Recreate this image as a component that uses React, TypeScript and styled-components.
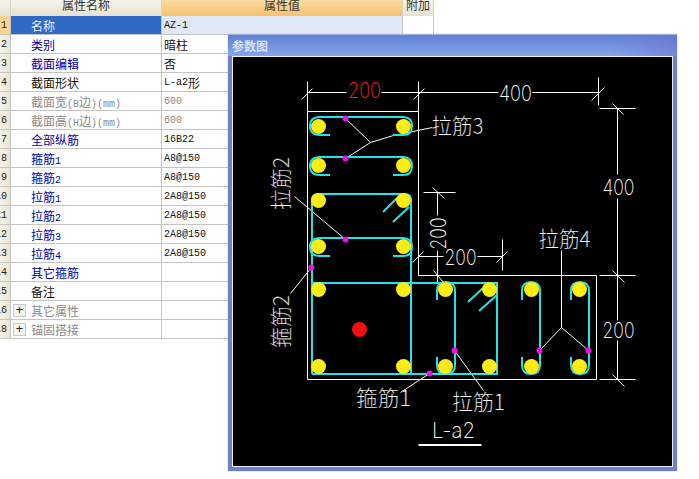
import React from "react";
import styled, { createGlobalStyle } from "styled-components";

const Global = createGlobalStyle`
  html, body { margin: 0; padding: 0; background: #fff; }
  body { width: 699px; height: 479px; overflow: hidden; position: relative; }
`;

const CJK = `"Noto Sans CJK SC", "Liberation Sans", sans-serif`;

const Sheet = styled.div`
  width: 434px;
  display: flex;
  flex-direction: column;
  font-family: ${CJK};
  font-size: 12px;
`;
const HeadRow = styled.div`
  display: grid;
  grid-template-columns: 11px 151px 241px 31px;
  height: 16px;
`;
const HeadCell = styled.div<{ $active?: boolean }>`
  overflow: hidden;
  box-sizing: border-box;
  display: flex;
  justify-content: center;
  align-items: flex-end;
  padding-bottom: 4px;
  line-height: 14px;
  color: #333;
  border-right: 1px solid #d8d4c4;
  background: ${(p) => p.$active
    ? "linear-gradient(#fbdca0, #f5c170)"
    : "linear-gradient(#f6f4ea, #e6e2d2)"};
`;
const Row = styled.div`
  display: grid;
  grid-template-columns: 11px 151px 241px 31px;
  height: 19px;
`;
const IndexCell = styled.div<{ $active?: boolean }>`
  box-sizing: border-box;
  overflow: hidden;
  display: flex;
  justify-content: flex-end;
  align-items: center;
  padding-right: 3px;
  font: 10px "Liberation Mono", monospace;
  color: #222;
  border-right: 1px solid #c4c4c0;
  border-bottom: 1px solid #c4c4c0;
  background: ${(p) => p.$active ? "#fbd58e" : "linear-gradient(90deg, #f4f2e8, #e8e5d6)"};
`;
const NameCell = styled.div<{ $tone: string; $selected?: boolean; $tree?: boolean }>`
  box-sizing: border-box;
  display: flex;
  align-items: center;
  gap: 5px;
  white-space: nowrap;
  overflow: hidden;
  padding-left: ${(p) => p.$tree ? "2px" : "20px"};
  color: ${(p) => p.$selected ? "#e8eefa" : p.$tone};
  background: ${(p) => p.$selected ? "#316ac5" : "#fff"};
  border-right: 1px solid #c4c4c4;
  border-bottom: 1px solid #c4c4c4;
`;
const Latin = styled.span`
  font: 10px "Liberation Mono", monospace;
`;
const ValueCell = styled.div<{ $tone: string; $selected?: boolean }>`
  box-sizing: border-box;
  display: flex;
  align-items: center;
  padding-left: 2px;
  white-space: nowrap;
  font: 10px "Liberation Mono", ${CJK};
  color: ${(p) => p.$tone};
  background: ${(p) => p.$selected ? "#e0e8f5" : "#fff"};
  border-right: 1px solid #c4c4c4;
  border-bottom: 1px solid #c4c4c4;
`;
const Han = styled.span`
  font: 12px ${CJK};
`;
const ExtraCell = styled.div`
  box-sizing: border-box;
  background: #fff;
  border-right: 1px solid #c4c4c4;
  border-bottom: 1px solid #c4c4c4;
`;
const Expander = styled.span`
  width: 11px;
  height: 11px;
  flex: none;
  border: 1px solid #c8c8c8;
  background: #f4f4f0;
  display: flex;
  align-items: center;
  justify-content: center;
  font: 13px/11px "Liberation Mono", monospace;
  color: #222;
`;

const Win = styled.section`
  position: absolute;
  left: 228px;
  top: 34px;
  width: 449px;
  height: 437px;
  box-sizing: border-box;
  display: flex;
  flex-direction: column;
  padding: 0 4px 4px;
  background: #6c80cf;
  border-top: 1px solid #9fb0dc;
  box-shadow: 0 0 1px #9aa6dc;
`;
const WinTitle = styled.header`
  height: 21px;
  flex: none;
  margin: 0 -4px;
  padding-left: 4px;
  display: flex;
  align-items: center;
  background:
    linear-gradient(90deg, transparent 85%, rgba(108, 112, 205, 0.55)),
    linear-gradient(#5f80d6, #86a6e8);
  font: bold 12px ${CJK};
  color: #d6e0f4;
`;
const Canvas = styled.div`
  flex: 1;
  min-height: 0;
  background: #000;
  border: 1px solid #eef0fa;
`;
const Drawing = styled.svg`
  display: block;
  width: 100%;
  height: 100%;
`;
const Rule = styled.path<{ $w?: number }>`
  fill: none;
  stroke: #fff;
  stroke-width: ${(p) => p.$w ?? 1};
`;
const Steel = styled.path`
  fill: none;
  stroke: #22e4e8;
  stroke-width: 2;
`;
const Dot = styled.circle<{ $c: string }>`
  fill: ${(p) => p.$c};
`;
const Num = styled.text<{ $c?: string }>`
  font: 200 22px "Inter", "Liberation Sans", sans-serif;
  fill: ${(p) => p.$c ?? "#fff"};
  text-anchor: middle;
  dominant-baseline: central;
`;
const Tag = styled.text`
  font: 300 22px "Noto Sans CJK SC", sans-serif;
  fill: #fff;
  text-anchor: middle;
  dominant-baseline: central;
  stroke: #000;
  stroke-width: 0.2px;
`;

type R = { n: string; name: React.ReactNode; tone: string; val?: React.ReactNode; vt?: string; tree?: boolean };
const B = "#0000a8", K = "#111", G = "#8a8a8a";
const rows: R[] = [
  { n: "1", name: "名称", tone: B, val: "AZ-1", vt: K },
  { n: "2", name: "类别", tone: B, val: <Han>暗柱</Han>, vt: K },
  { n: "3", name: "截面编辑", tone: B, val: <Han>否</Han>, vt: K },
  { n: "4", name: "截面形状", tone: K, val: <>L-a2<Han>形</Han></>, vt: K },
  { n: "5", name: <>截面宽<Latin>(B</Latin>边<Latin>)(mm)</Latin></>, tone: G, val: "600", vt: G },
  { n: "6", name: <>截面高<Latin>(H</Latin>边<Latin>)(mm)</Latin></>, tone: G, val: "600", vt: G },
  { n: "7", name: "全部纵筋", tone: B, val: "16B22", vt: K },
  { n: "8", name: <>箍筋<Latin>1</Latin></>, tone: B, val: "A8@150", vt: K },
  { n: "9", name: <>箍筋<Latin>2</Latin></>, tone: B, val: "A8@150", vt: K },
  { n: "10", name: <>拉筋<Latin>1</Latin></>, tone: B, val: "2A8@150", vt: K },
  { n: "11", name: <>拉筋<Latin>2</Latin></>, tone: B, val: "2A8@150", vt: K },
  { n: "12", name: <>拉筋<Latin>3</Latin></>, tone: B, val: "2A8@150", vt: K },
  { n: "13", name: <>拉筋<Latin>4</Latin></>, tone: B, val: "2A8@150", vt: K },
  { n: "14", name: "其它箍筋", tone: B },
  { n: "15", name: "备注", tone: K },
  { n: "16", name: "其它属性", tone: G, tree: true },
  { n: "18", name: "锚固搭接", tone: G, tree: true },
];

const bars: [number, number][] = [
  [318, 126], [403, 126], [318, 165], [403, 165], [318, 200], [403, 200], [318, 246], [403, 246],
  [318, 289], [403, 289], [318, 366], [403, 366], [445, 289], [489, 289], [445, 366], [489, 366],
  [531, 289], [579, 289], [531, 366], [579, 366],
];
const links: [number, number][] = [[345, 118], [345, 158], [345, 239], [311, 267], [429, 373], [454, 350], [539, 350], [588, 350]];

const hTie = (t: number) => {
  const b = t + 18, m = t + 9;
  return `M330 ${b}H320Q310 ${b} 310 ${m}Q310 ${t} 320 ${t}H403Q412 ${t} 412 ${m}Q412 ${b} 403 ${b}H393`;
};
const vTie = (l: number) => {
  const r = l + 18, c = l + 9;
  return `M${l} 300V291Q${l} 282 ${c} 282Q${r} 282 ${r} 291V365Q${r} 374 ${c} 374Q${l} 374 ${l} 365V357`;
};

const rules = [
  "M307 81V111M301 99L312 88M418 81V111M413 99L424 88M307 92H346M381 92H498M532 92H598M598 77V105M591 100L604 87",
  "M599 108H635M612 103L623 114M617 108V174M617 198V320M599 275H635M612 270L624 282M617 340V379M599 379H635M612 374L624 386",
  "M423 192H455M432 187L444 198M437 192V215M437 250V282M433 270L443 282M418 256H443M477 256H502M502 239V270M412 262L423 251M496 262L507 251",
  "M345 118L370 142M345 158L370 142L393 135L432 127M345 239L294 196M311 267L290 293M429 373L400 392M454 350L483 390",
  "M561 250V327L539 350M561 327L588 350",
];

export default function App() {
  return (
    <>
      <Global />
      <Sheet>
        <HeadRow>
          <HeadCell />
          <HeadCell>属性名称</HeadCell>
          <HeadCell $active>属性值</HeadCell>
          <HeadCell>附加</HeadCell>
        </HeadRow>
        {rows.map((r, i) => (
          <Row key={r.n}>
            <IndexCell $active={i === 0}>{r.n}</IndexCell>
            <NameCell $tone={r.tone} $selected={i === 0} $tree={r.tree}>
              {r.tree && <Expander>+</Expander>}
              <span>{r.name}</span>
            </NameCell>
            <ValueCell $tone={r.vt ?? K} $selected={i === 0}>{r.val}</ValueCell>
            <ExtraCell />
          </Row>
        ))}
      </Sheet>
      <Win>
        <WinTitle>参数图</WinTitle>
        <Canvas>
          <Drawing viewBox="232.5 56.5 439 409" preserveAspectRatio="none">
            <Rule d="M307 111H418V275H596V379H307Z" />
            {rules.map((d) => <Rule key={d} d={d} />)}
            <Rule $w={2} d="M418 444.5H481" />
            <g transform="translate(-0.5 -0.5)">
              <Steel d={hTie(117)} />
              <Steel d={hTie(157)} />
              <Steel d={hTie(238)} />
              <Steel d="M312 374V200Q312 194 318 194H405Q411 194 411 200V374" />
              <Steel d="M312 374H497V283H312" />
              <Steel d={vTie(437)} />
              <Steel d={vTie(522)} />
              <Steel d={vTie(571)} />
              <Steel d="M383 212L397 198M393 222L409 207M468 302L483 288M479 311L497 295" />
            </g>
            {bars.map(([x, y]) => <Dot key={`${x}-${y}`} $c="#ffec12" cx={x} cy={y} r={7.5} />)}
            <Dot $c="#f01010" cx={359} cy={329} r={7.5} />
            {links.map(([x, y]) => <Dot key={`${x}-${y}`} $c="#ee10e8" cx={x} cy={y} r={3} />)}
            <Num $c="#ff2020" x={364} y={89} textLength={33} lengthAdjust="spacingAndGlyphs">200</Num>
            <Num x={515} y={92} textLength={33} lengthAdjust="spacingAndGlyphs">400</Num>
            <Num x={618} y={186} textLength={32} lengthAdjust="spacingAndGlyphs">400</Num>
            <Num x={618} y={329} textLength={32} lengthAdjust="spacingAndGlyphs">200</Num>
            <Num x={460} y={256} textLength={32} lengthAdjust="spacingAndGlyphs">200</Num>
            <Num x={437} y={233} textLength={32} lengthAdjust="spacingAndGlyphs" transform="rotate(-90 437 233)">200</Num>
            <Num x={453} y={429} textLength={43} lengthAdjust="spacingAndGlyphs">L-a2</Num>
            <Tag x={457} y={123} textLength={52} lengthAdjust="spacingAndGlyphs">拉筋3</Tag>
            <Tag x={564} y={236} textLength={52} lengthAdjust="spacingAndGlyphs">拉筋4</Tag>
            <Tag x={383} y={395} textLength={55} lengthAdjust="spacingAndGlyphs">箍筋1</Tag>
            <Tag x={478} y={399} textLength={53} lengthAdjust="spacingAndGlyphs">拉筋1</Tag>
            <Tag x={278} y={183} textLength={53} lengthAdjust="spacingAndGlyphs" transform="rotate(-90 278 183)">拉筋2</Tag>
            <Tag x={278} y={321} textLength={53} lengthAdjust="spacingAndGlyphs" transform="rotate(-90 278 321)">箍筋2</Tag>
          </Drawing>
        </Canvas>
      </Win>
    </>
  );
}
